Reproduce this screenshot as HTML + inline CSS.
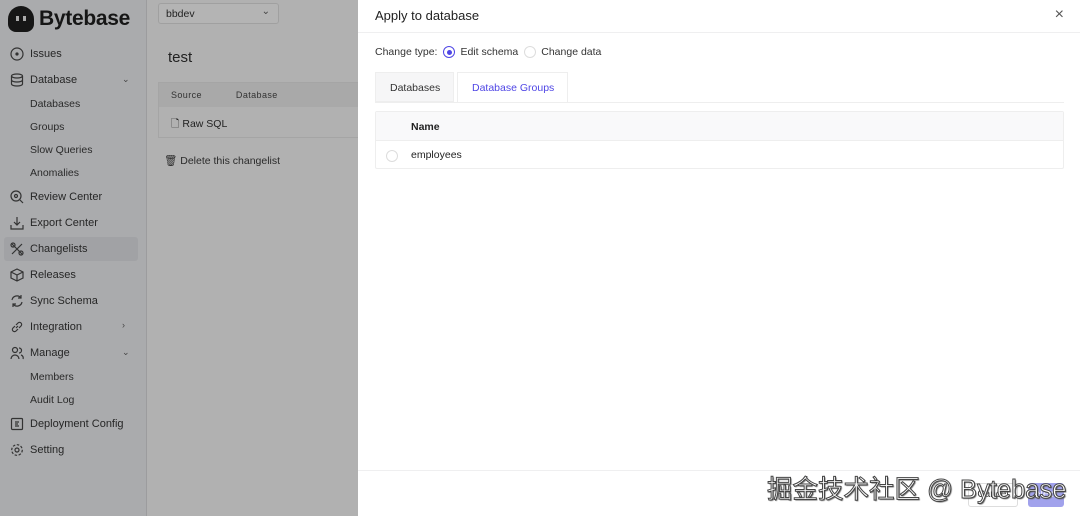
<!DOCTYPE html>
<html><head><meta charset="utf-8"><style>
*{box-sizing:border-box;margin:0;padding:0}
body{width:1080px;height:516px;overflow:hidden;font-family:"Liberation Sans","Noto Sans CJK SC",sans-serif;position:relative;background:#b1b1b1;color:#1f1f1f}
.sb{position:absolute;left:0;top:0;width:147px;height:516px;background:#aaabad;border-right:1px solid #9c9c9e}
.logo{position:absolute;left:8px;top:6px;font-size:21px;font-weight:bold;color:#161616;display:flex;align-items:center;letter-spacing:-0.3px}
.logo .m{width:26px;height:26px;border-radius:13px 13px 8px 8px;background:#161616;margin-right:5px;position:relative}
.it{position:absolute;left:10px;font-size:11px;color:#262626;display:flex;align-items:center;height:16px}
.it svg{width:14px;height:14px;margin-right:6px;fill:none;stroke:#333;stroke-width:1.2}
.sub{position:absolute;left:30px;font-size:10.5px;color:#2a2a2a}
.chev{position:absolute;left:122px;font-size:9px;color:#444}
.main{position:absolute;left:147px;top:0;width:211px;height:516px;background:#b1b1b1}
.drawer{position:absolute;left:358px;top:0;width:722px;height:516px;background:#fff}
</style></head><body>
<div class="sb">
 <div class="logo"><div class="m"><span style="position:absolute;left:8px;top:10px;width:3px;height:5px;background:#aaa"></span><span style="position:absolute;left:15px;top:10px;width:3px;height:5px;background:#aaa"></span></div>Bytebase</div>
 <div style="position:absolute;left:4px;top:237px;width:134px;height:24px;background:#a1a2a5;border-radius:3px"></div>
 <div class="it" style="top:46px"><svg viewBox="0 0 14 14"><circle cx="7" cy="7" r="6"/><circle cx="7" cy="7" r="1" fill="#333"/></svg>Issues</div>
 <div class="it" style="top:72px"><svg viewBox="0 0 14 14"><ellipse cx="7" cy="3" rx="5.5" ry="2"/><path d="M1.5 3v8c0 1.1 2.5 2 5.5 2s5.5-.9 5.5-2V3M1.5 7c0 1.1 2.5 2 5.5 2s5.5-.9 5.5-2"/></svg>Database</div><div class="chev" style="top:74px">⌄</div>
 <div class="sub" style="top:98px">Databases</div>
 <div class="sub" style="top:121px">Groups</div>
 <div class="sub" style="top:144px">Slow Queries</div>
 <div class="sub" style="top:167px">Anomalies</div>
 <div class="it" style="top:189px"><svg viewBox="0 0 14 14"><circle cx="6" cy="6" r="5"/><circle cx="6" cy="6" r="1.5"/><path d="M10 10l3 3"/></svg>Review Center</div>
 <div class="it" style="top:215px"><svg viewBox="0 0 14 14"><path d="M7 1v8M4 6l3 3 3-3M1 9v4h12V9"/></svg>Export Center</div>
 <div class="it" style="top:241px"><svg viewBox="0 0 14 14"><path d="M2 2l10 10M12 2L2 12"/><circle cx="3" cy="3" r="2"/><circle cx="11" cy="11" r="2"/></svg>Changelists</div>
 <div class="it" style="top:267px"><svg viewBox="0 0 14 14"><path d="M7 1l6 3v6l-6 3-6-3V4zM1 4l6 3 6-3M7 7v6"/></svg>Releases</div>
 <div class="it" style="top:293px"><svg viewBox="0 0 14 14"><path d="M2 6a5 5 0 0 1 9-2M12 8a5 5 0 0 1-9 2M11 1v3H8M3 13v-3h3"/></svg>Sync Schema</div>
 <div class="it" style="top:319px"><svg viewBox="0 0 14 14"><path d="M6 8l2-2M5 6L3 8a2.1 2.1 0 0 0 3 3l2-2M9 8l2-2a2.1 2.1 0 0 0-3-3L6 5"/></svg>Integration</div><div class="chev" style="top:320px">›</div>
 <div class="it" style="top:345px"><svg viewBox="0 0 14 14"><circle cx="5" cy="4" r="2.5"/><path d="M1 13a4 4 0 0 1 8 0M9 2a2.5 2.5 0 0 1 0 5M11 9a3 3 0 0 1 2 4"/></svg>Manage</div><div class="chev" style="top:347px">⌄</div>
 <div class="sub" style="top:371px">Members</div>
 <div class="sub" style="top:394px">Audit Log</div>
 <div class="it" style="top:416px"><svg viewBox="0 0 14 14"><rect x="1.5" y="1.5" width="11" height="11" rx="1"/><path d="M5 5h4M5 7h3M5 9h4"/></svg>Deployment Config</div>
 <div class="it" style="top:442px"><svg viewBox="0 0 14 14"><circle cx="7" cy="7" r="2"/><circle cx="7" cy="7" r="5.3" stroke-dasharray="2.5 1.6"/></svg>Setting</div>
</div>
<div class="main">
 <div style="position:absolute;left:11px;top:3px;width:121px;height:21px;border:1px solid #a0a0a0;background:#b4b4b4;border-radius:3px;font-size:10.5px;padding:4px 7px;color:#222">bbdev<span style="position:absolute;right:8px;top:2px;font-size:10px;color:#444">⌄</span></div>
 <div style="position:absolute;left:21px;top:49px;font-size:15px;color:#222">test</div>
 <div style="position:absolute;left:11px;top:82px;width:210px;height:56px;border:1px solid #a5a5a5">
  <div style="height:24px;background:#a9a9a9;font-size:9px;color:#333;padding:7px 12px;letter-spacing:.4px">Source<span style="margin-left:34px">Database</span></div>
  <div style="font-size:10.5px;padding:9px 12px;color:#222">🗋 Raw SQL</div>
 </div>
 <div style="position:absolute;left:17px;top:154px;font-size:10.5px;color:#2a2a2a">🗑 Delete this changelist</div>
</div>
<div class="drawer">
 <div style="position:absolute;left:17px;top:8px;font-size:13px;color:#222">Apply to database</div>
 <div style="position:absolute;right:16px;top:6px;font-size:16px;color:#555">×</div>
 <div style="position:absolute;left:0;top:32px;width:722px;height:1px;background:#efeff0"></div>
 <div style="position:absolute;left:17px;top:46px;font-size:10.5px;color:#333;display:flex;align-items:center">Change type:
  <span style="display:inline-block;width:12px;height:12px;border:1px solid #4f46e5;border-radius:50%;margin:0 5px 0 6px;position:relative"><span style="position:absolute;left:2.5px;top:2.5px;width:5px;height:5px;border-radius:50%;background:#4f46e5"></span></span>Edit schema
  <span style="display:inline-block;width:12px;height:12px;border:1px solid #ddd;border-radius:50%;margin:0 5px 0 6px"></span>Change data</div>
 <div style="position:absolute;left:17px;top:72px;width:79px;height:30px;background:#f6f6f7;border:1px solid #eee;font-size:10.5px;padding:9px 14px;color:#333;white-space:nowrap">Databases</div>
 <div style="position:absolute;left:99px;top:72px;width:111px;height:31px;background:#fff;border:1px solid #eee;border-bottom:none;font-size:10.5px;padding:9px 14px;color:#4f46e5;white-space:nowrap">Database Groups</div>
 <div style="position:absolute;left:17px;top:102px;width:689px;height:1px;background:#eee"></div>
 <div style="position:absolute;left:17px;top:111px;width:689px;height:58px;border:1px solid #eee;border-radius:2px">
  <div style="height:29px;background:#f9f9fa;border-bottom:1px solid #eee;font-size:10.5px;font-weight:bold;padding:9px 35px;color:#222">Name</div>
  <div style="font-size:10.5px;padding:8px 35px;color:#222;position:relative"><span style="position:absolute;left:10px;top:9px;width:12px;height:12px;border:1px solid #ddd;border-radius:50%"></span>employees</div>
 </div>
 <div style="position:absolute;left:0;top:470px;width:722px;height:1px;background:#efeff0"></div>
 <div style="position:absolute;left:610px;top:483px;width:50px;height:24px;border:1px solid #ddd;border-radius:3px;font-size:10px;text-align:center;line-height:22px;color:#333">Cancel</div>
 <div style="position:absolute;left:670px;top:483px;width:36px;height:24px;background:#a1a2ec;border-radius:3px;font-size:10px;text-align:center;line-height:24px;color:#fff">Next</div>
</div>
<div style="position:absolute;left:767px;top:469px;font-size:25.5px;color:#fff;-webkit-text-stroke:1px #444;text-shadow:1px 1px 1px #666;white-space:nowrap;font-family:'Liberation Sans','Noto Sans CJK SC',sans-serif">掘金技术社区 @ Bytebase</div>
</body></html>
